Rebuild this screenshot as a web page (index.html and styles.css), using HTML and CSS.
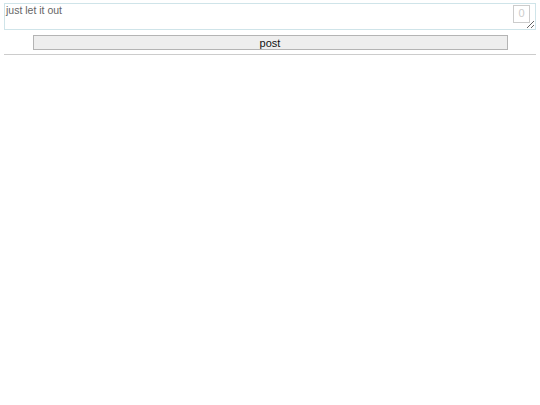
FILE: index.html
```html
<!DOCTYPE html>
<html>
<head>
<meta charset="utf-8">
<link rel="stylesheet" href="styles.css">
</head>
<body>
<div class="page">
  <div class="composer">
    <textarea class="box" placeholder="just let it out"></textarea>
    <span class="counter">0</span>
  </div>
  <div class="actions">
    <button class="post">post</button>
  </div>
  <div class="rule"></div>
</div>
</body>
</html>
```
FILE: styles.css
```css
html, body {
  margin: 0;
  padding: 0;
  background: #fff;
  font-family: "Liberation Sans", Arial, sans-serif;
}
.page {
  padding: 3px 4px 0 4px;
}
.composer {
  position: relative;
  height: 27px;
}
.box {
  display: block;
  box-sizing: border-box;
  width: 532px;
  height: 27px;
  margin: 0;
  padding: 0 1px 1px 1px;
  border: 1px solid #cfe4e9;
  font-family: "Liberation Sans", Arial, sans-serif;
  font-size: 10.5px;
  color: #555;
  resize: vertical;
  outline: none;
}
.box::placeholder {
  color: #666;
  opacity: 1;
}
.counter {
  position: absolute;
  left: 509px;
  top: 2px;
  box-sizing: border-box;
  width: 17px;
  height: 18px;
  border: 1px solid #ccc;
  color: #cccccc;
  font-size: 11px;
  line-height: 15px;
  text-align: center;
}
.actions {
  display: flex;
  justify-content: center;
  margin-top: 5px;
}
.post {
  box-sizing: border-box;
  width: 475px;
  height: 15px;
  margin: 0;
  padding: 0;
  border: 1px solid #b4b4b4;
  background: #eeeeee;
  font-family: "Liberation Sans", Arial, sans-serif;
  font-size: 11px;
  line-height: 12px;
  color: #111;
}
.rule {
  margin-top: 4px;
  width: 532px;
  height: 1px;
  background: #cccccc;
}
```
